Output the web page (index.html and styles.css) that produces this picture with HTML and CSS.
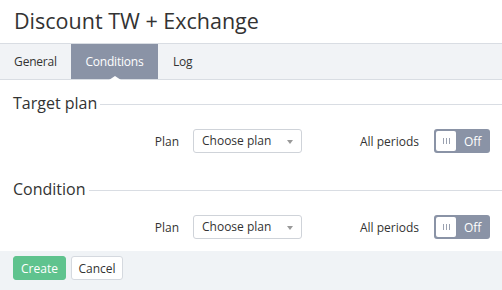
FILE: index.html
```html
<!DOCTYPE html>
<html lang="en">
<head>
    <meta charset="UTF-8">
    <title>Discount TW + Exchange</title>
    <link rel="stylesheet" href="styles.css">
</head>
<body>

    <!-- Header -->
    <div class="page-head">
        <h1>Discount TW + Exchange</h1>
    </div>

    <!-- Tabs -->
    <div class="tabs">
        <span class="tab tab-general">General</span>
        <span class="tab tab-conditions active">Conditions</span>
        <span class="tab tab-log">Log</span>
    </div>

    <div class="content">
        <div class="section-title"><span>Target plan</span></div>
        <div class="form-row">
            <label class="lbl lbl-plan">Plan</label>
            <div class="select">Choose plan <span class="caret"></span></div>
            <label class="lbl lbl-periods">All periods</label>
            <div class="toggle"><span class="knob"><i></i><i></i><i></i></span>Off</div>
        </div>

        <div class="section-title second"><span>Condition</span></div>
        <div class="form-row">
            <label class="lbl lbl-plan">Plan</label>
            <div class="select">Choose plan <span class="caret"></span></div>
            <label class="lbl lbl-periods">All periods</label>
            <div class="toggle"><span class="knob"><i></i><i></i><i></i></span>Off</div>
        </div>
    </div>

    <!-- Footer buttons -->
    <div class="footer">
        <button class="btn btn-create">Create</button>
        <button class="btn btn-cancel">Cancel</button>
    </div>

</body>
</html>
```

FILE: styles.css
```css
body {
    margin: 0;
    font-family: "Open Sans", "Liberation Sans", sans-serif;
    color: #333;
    background: #fff;
    overflow: hidden;
}

/* Header */
.page-head {
    height: 44px;
    border-bottom: 1px solid #d9dde3;
    box-sizing: border-box;
    padding: 6px 14px 0;
}

.page-head h1 {
    margin: 0;
    font-size: 21.5px;
    font-weight: 400;
    line-height: 30px;
    color: #333;
}

/* Tabs */
.tabs {
    display: flex;
    height: 36px;
    background: #f1f3f6;
    border-bottom: 1px solid #d9dde3;
    box-sizing: border-box;
}

.tab {
    position: relative;
    font-size: 12px;
    line-height: 35px;
    color: #333;
    text-align: center;
    letter-spacing: -0.2px;
}

.tab-general {
    width: 71px;
}

.tab-conditions {
    width: 87px;
}

.tab-log {
    padding: 0 15px;
}

.tab.active {
    background: #8a93a6;
    color: #fff;
}

.tab.active::after {
    content: "";
    position: absolute;
    left: 50%;
    bottom: -1px;
    margin-left: -6px;
    border-left: 6px solid transparent;
    border-right: 6px solid transparent;
    border-bottom: 4px solid #fff;
}

/* Content */
.content {
    padding: 12px 0 12px;
}

.section-title {
    display: flex;
    align-items: center;
    padding-left: 13px;
    font-size: 16px;
    line-height: 22px;
    color: #333;
}

.section-title::after {
    content: "";
    flex: 1;
    height: 1px;
    background: #d9dde3;
    margin-left: 3px;
    margin-top: 2px;
}

.section-title.second {
    margin-top: 25px;
}

.form-row {
    display: flex;
    align-items: center;
    margin-top: 15px;
    height: 24px;
}

.lbl {
    font-size: 12px;
    text-align: right;
    color: #333;
}

.lbl-plan {
    width: 179px;
    margin-right: 14px;
}

.lbl-periods {
    width: 117px;
    margin-right: 15px;
}

.select {
    position: relative;
    width: 109px;
    height: 24px;
    box-sizing: border-box;
    border: 1px solid #cfd3d9;
    border-radius: 3px;
    padding-left: 8px;
    font-size: 12px;
    line-height: 22px;
    color: #333;
}

.caret {
    position: absolute;
    right: 8px;
    top: 10px;
    border-left: 3px solid transparent;
    border-right: 3px solid transparent;
    border-top: 4px solid #999;
}

.toggle {
    display: flex;
    align-items: center;
    width: 56px;
    height: 24px;
    box-sizing: border-box;
    padding: 2px;
    background: #8a93a6;
    border-radius: 3px;
    color: #fff;
    font-size: 12px;
}

.knob {
    display: flex;
    align-items: center;
    justify-content: center;
    gap: 2px;
    width: 20px;
    height: 20px;
    background: #fff;
    border-radius: 2px;
    margin-right: 8px;
}

.knob i {
    width: 1px;
    height: 6px;
    background: #9aa1b0;
}

/* Footer */
.footer {
    background: #f0f3f6;
    padding: 5px 13px 11px;
    display: flex;
    gap: 5px;
}

.btn {
    height: 24px;
    border-radius: 3px;
    font-family: "Open Sans", "Liberation Sans", sans-serif;
    font-size: 12px;
    padding: 0;
    cursor: pointer;
}

.btn-create {
    width: 53px;
    background: #5fc38e;
    border: 1px solid #5fc38e;
    color: #fff;
}

.btn-cancel {
    width: 52px;
    background: #fff;
    border: 1px solid #d5d9df;
    color: #333;
}
```
